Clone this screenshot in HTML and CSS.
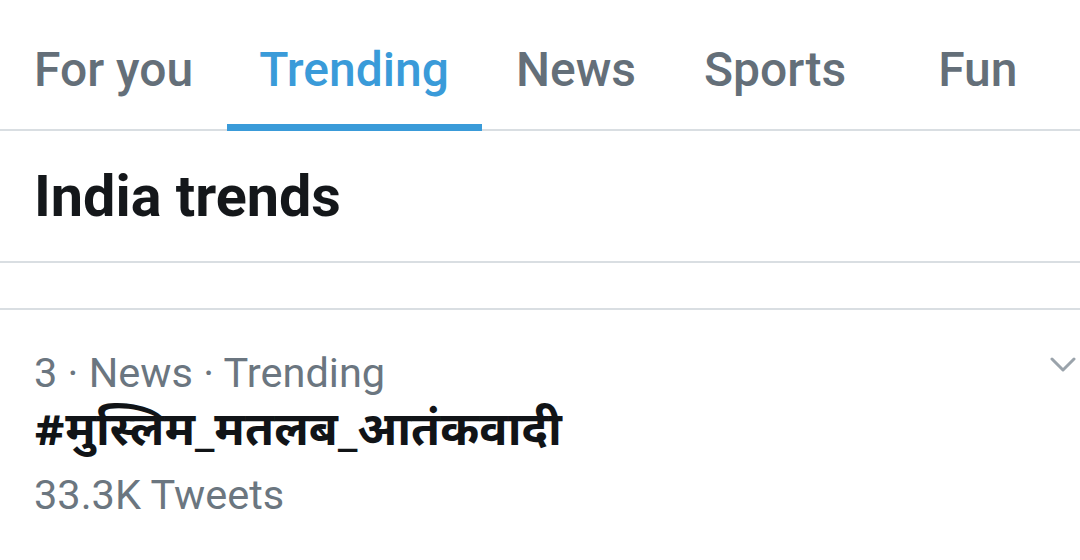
FILE: index.html
```html
<!DOCTYPE html>
<html lang="en">
<head>
<meta charset="utf-8">
<title>Trending</title>
<link rel="stylesheet" href="styles.css">
</head>
<body>
<nav class="tabs">
  <div class="tab">For you</div>
  <div class="tab tab-active">Trending</div>
  <div class="tab">News</div>
  <div class="tab">Sports</div>
  <div class="tab tab-fun">Fun</div>
</nav>
<header class="section-head">
  <h1 class="section-title">India trends</h1>
</header>
<div class="spacer-row"></div>
<article class="trend">
  <div class="trend-meta">3 · News · Trending</div>
  <div class="trend-tag">#मुस्लिम_मतलब_आतंकवादी</div>
  <div class="trend-count">33.3K Tweets</div>
  <svg class="trend-caret" width="26" height="16" viewBox="0 0 26 16" aria-hidden="true">
    <polyline points="2,2 13,13 24,2" fill="none" stroke="#9aa3ab" stroke-width="3" stroke-linecap="round" stroke-linejoin="round"/>
  </svg>
</article>
</body>
</html>
```
FILE: styles.css
```css
html, body {
  margin: 0;
  padding: 0;
  background: #ffffff;
}
body {
  font-family: Roboto, "Liberation Sans", "Noto Sans", sans-serif;
  width: 1080px;
  height: 560px;
  overflow: hidden;
}
.tabs {
  display: flex;
  height: 129px;
  border-bottom: 2px solid #d9dee2;
}
.tab {
  position: relative;
  padding: 47px 34px 0;
  font-size: 48px;
  line-height: 46px;
  font-weight: 500;
  color: #646f79;
  white-space: nowrap;
}
.tab-active {
  padding: 47px 33px 0 32px;
  color: #3a9bd9;
}
.tab-active::after {
  content: "";
  position: absolute;
  left: 0;
  right: 0;
  bottom: -2px;
  height: 7px;
  background: #3a9bd9;
}
.tab-fun {
  margin-left: 24px;
}
.section-head {
  height: 132px;
  border-bottom: 2px solid #d9dee2;
  padding: 37px 34px 0;
  box-sizing: border-box;
}
.section-title {
  margin: 0;
  font-size: 57.5px;
  line-height: 58px;
  font-weight: 700;
  color: #14171a;
}
.spacer-row {
  height: 45px;
  border-bottom: 2px solid #d9dee2;
}
.trend {
  position: relative;
  padding: 38px 34px 0;
}
.trend-meta,
.trend-count {
  font-size: 41.5px;
  line-height: 50px;
  color: #6b7680;
}
.trend-tag {
  font-family: "Noto Sans Devanagari", "Lohit Devanagari", "Noto Sans", sans-serif;
  font-size: 47px;
  line-height: 72px;
  font-weight: 700;
  color: #111417;
}
.trend-caret {
  position: absolute;
  top: 47px;
  right: 4px;
}
```
